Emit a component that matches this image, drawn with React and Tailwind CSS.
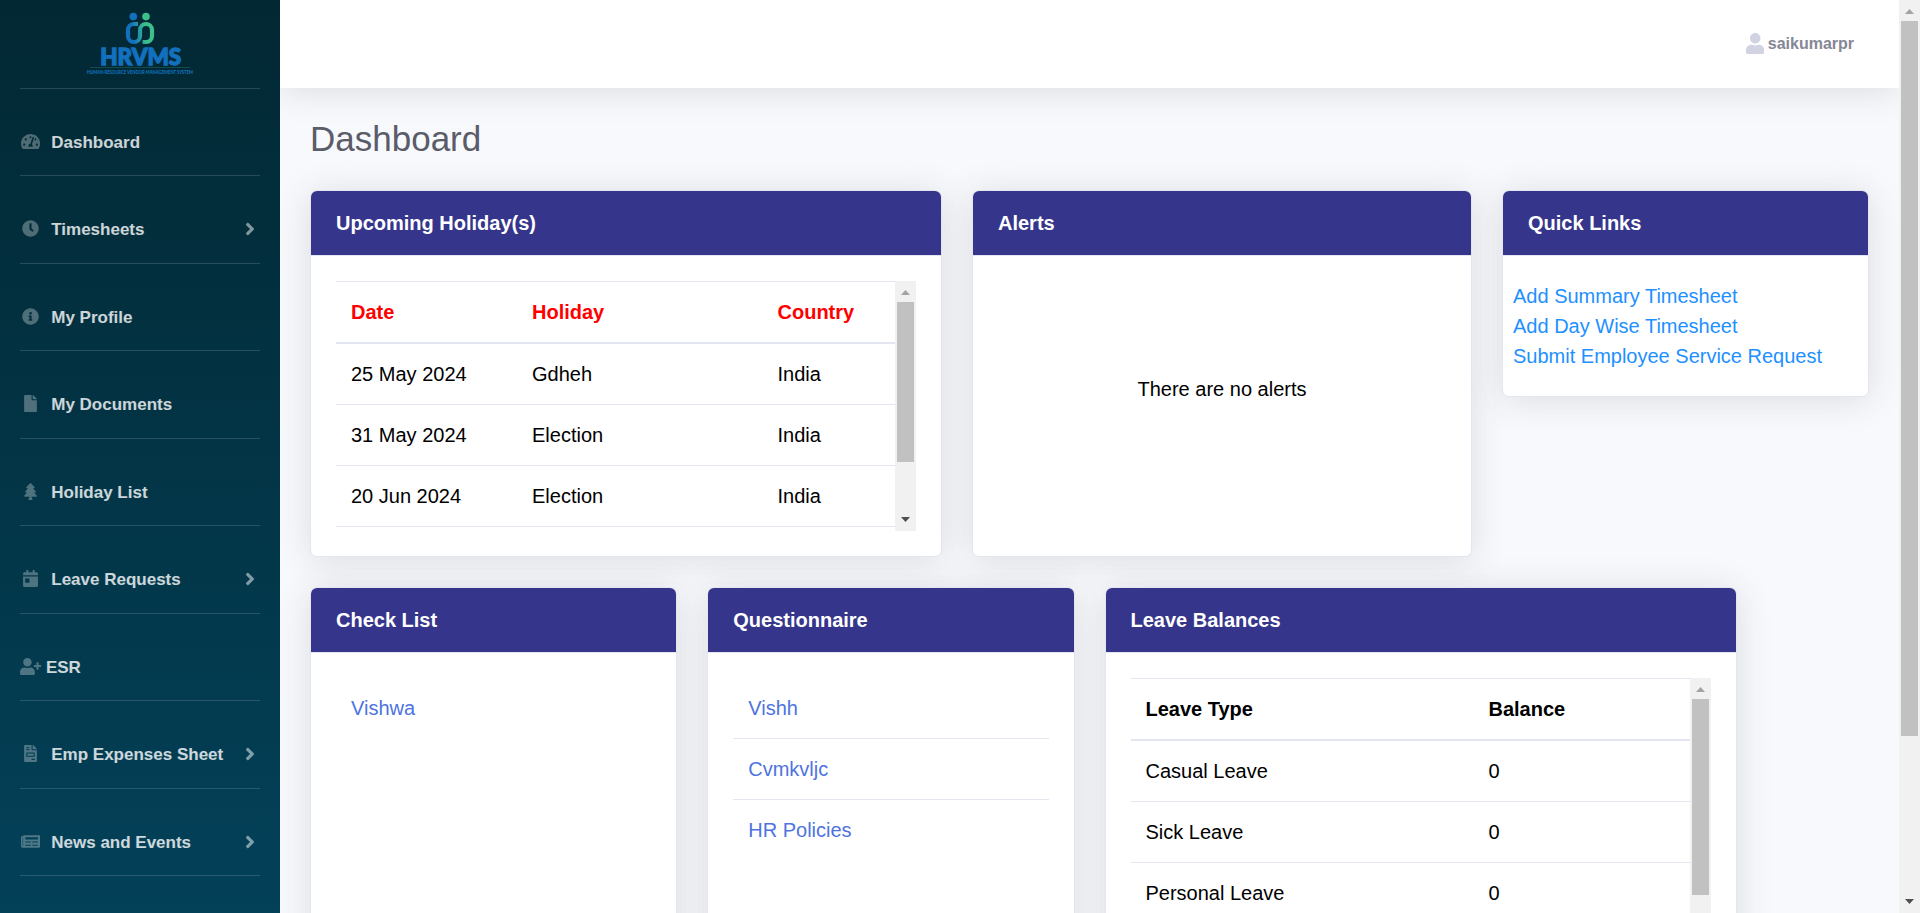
import {
  FaTachometerAlt, FaClock, FaInfoCircle, FaFile, FaTree, FaCalendarDay,
  FaUserPlus, FaFileInvoice, FaNewspaper, FaAngleRight, FaUser,
} from "react-icons/fa";

const NAV = [
  { label: "Dashboard", icon: FaTachometerAlt, size: "w-[19.1px]" },
  { label: "Timesheets", icon: FaClock, size: "w-[17px]", more: true },
  { label: "My Profile", icon: FaInfoCircle, size: "w-[17px]" },
  { label: "My Documents", icon: FaFile, size: "w-[13px]" },
  { label: "Holiday List", icon: FaTree, size: "w-[13px]" },
  { label: "Leave Requests", icon: FaCalendarDay, size: "w-[15px]", more: true },
  { label: "ESR", icon: FaUserPlus, size: "w-[21.25px]", tight: true },
  { label: "Emp Expenses Sheet", icon: FaFileInvoice, size: "w-[13px]", more: true },
  { label: "News and Events", icon: FaNewspaper, size: "w-[19.1px]", more: true },
];

function Logo() {
  return (
    <svg width="120" height="68" viewBox="-6 0 120 68" className="block overflow-visible">
      <defs>
        <linearGradient id="link" gradientUnits="userSpaceOnUse" x1="40" y1="30" x2="66" y2="26">
          <stop offset="0.3" stopColor="#1270bd" />
          <stop offset="0.8" stopColor="#3dbf8b" />
        </linearGradient>
      </defs>
      <circle cx="47.3" cy="4.6" r="3.8" fill="#1270bd" />
      <circle cx="60" cy="4.6" r="3.8" fill="#3dbf8b" />
      <path
        d="M52 12 H48 a6 6 0 0 0 -6 6 V24 a6 6 0 0 0 12 0 V18 a6 6 0 0 1 12 0 V24 a6 6 0 0 1 -6 6 H56.5"
        fill="none" stroke="url(#link)" strokeWidth="4.2"
      />
      <text x="14.2" y="52.7" fontFamily="Lato, sans-serif" fontWeight="900" fontSize="22.5" textLength="81" lengthAdjust="spacingAndGlyphs" fill="#1270bd" stroke="#1270bd" strokeWidth="1.3">HRVMS</text>
      <rect x="4" y="55" width="100" height="1" fill="#0f4c4c" />
      <text x="1" y="62" fontFamily="Lato, sans-serif" fontWeight="900" fontSize="4.8" textLength="106" lengthAdjust="spacingAndGlyphs" fill="#1270bd">HUMAN RESOURCE VENDOR MANAGEMENT SYSTEM</text>
    </svg>
  );
}

function Sidebar() {
  return (
    <aside className="flex h-full w-[280px] shrink-0 flex-col bg-linear-to-b from-[#022833] to-[#034159] px-5">
      <div className="flex h-[88.75px] shrink-0 justify-center border-b border-white/15 pt-3">
        <Logo />
      </div>
      {NAV.map(({ label, icon: Icon, size, more, tight }) => (
        <a key={label} className="flex h-[87.5px] shrink-0 items-center border-b border-white/15 pt-[21px] text-[17px] font-bold text-white/80">
          <span className={tight ? "mr-[4.7px] flex justify-center pb-[2.5px]" : "mr-[10px] flex w-[21.25px] justify-center pb-[2.5px]"}>
            <Icon className={`h-[17px] shrink-0 text-white/30 ${size}`} />
          </span>
          <span className="flex-1">{label}</span>
          {more && <FaAngleRight className="mr-[4.7px] mb-[2px] h-5 w-[10px] text-white/50" />}
        </a>
      ))}
    </aside>
  );
}

function ScrollBar({ thumb, className = "" }) {
  return (
    <div className={`flex w-[21px] shrink-0 flex-col items-center bg-[#f1f1f1] ${className}`}>
      <svg width="21" height="21" viewBox="0 0 21 21" className="shrink-0"><path d="M6 14 L10.5 9 L15 14 Z" fill="#a3a3a3" /></svg>
      <div className={`w-[17px] shrink-0 bg-[#c1c1c1] ${thumb}`} />
      <svg width="21" height="21" viewBox="0 0 21 21" className="mt-auto shrink-0"><path d="M6 7 L15 7 L10.5 12 Z" fill="#505050" /></svg>
    </div>
  );
}

function Card({ title, className = "", children }) {
  return (
    <section className={`flex shrink-0 flex-col rounded-[7px] border border-[#e3e6f0] bg-white shadow-[0_3px_35px_0_rgba(58,59,69,0.15)] ${className}`}>
      <h6 className="flex h-[65px] shrink-0 items-center rounded-t-[6px] border-b border-[#e3e6f0] bg-[#35368b] px-[25px] text-xl font-bold text-white">
        {title}
      </h6>
      {children}
    </section>
  );
}

function Table({ head, rows, widths, headClass, thumb }) {
  return (
    <div className="flex h-[250px] overflow-hidden">
      <table className="w-full table-fixed border-separate border-spacing-0 self-start text-left text-xl text-black">
        <colgroup>{widths.map((w) => <col key={w} className={w} />)}</colgroup>
        <thead>
          <tr className={headClass}>
            {head.map((h) => <th key={h} className="h-[63px] border-t border-b-2 border-[#e3e6f0] px-[15px] py-0">{h}</th>)}
          </tr>
        </thead>
        <tbody>
          {rows.map((r) => (
            <tr key={r[0]}>
              {r.map((c, i) => <td key={i} className="h-[61px] border-b border-[#e3e6f0] px-[15px] py-0">{c}</td>)}
            </tr>
          ))}
        </tbody>
      </table>
      <ScrollBar thumb={thumb} />
    </div>
  );
}

function LinkRows({ items }) {
  return (
    <ul className="px-[25px] pt-[25px] text-xl text-[#4e73df]">
      {items.map((t, i) => (
        <li key={t} className={i ? "flex h-[61px] items-center border-t border-[#e3e6f0] px-[15px]" : "flex h-[60px] items-center px-[15px]"}>{t}</li>
      ))}
    </ul>
  );
}

export default function App() {
  return (
    <div className="flex h-[913px] w-[1920px] overflow-hidden bg-[#f8f9fc] font-['Liberation_Sans',Arial,sans-serif]">
      <Sidebar />
      <div className="flex min-w-0 flex-1 flex-col overflow-hidden">
        <header className="flex h-[88px] shrink-0 items-center justify-end gap-[3.5px] bg-white pr-[45px] shadow-[0_3px_35px_0_rgba(58,59,69,0.15)]">
          <FaUser className="mb-px h-[21px] w-[18.4px] text-[#d1d3e2]" />
          <span className="text-base font-bold text-[#858796]">saikumarpr</span>
        </header>
        <main className="px-[30px] pt-[30px]">
          <h1 className="mb-[30px] text-[35px] leading-[42px] text-[#5a5c69]">Dashboard</h1>
          <div className="mb-[30px] flex items-start gap-[30px]">
            <Card title="Upcoming Holiday(s)" className="h-[367px] w-[632px]">
              <div className="p-[25px]">
                <Table
                  head={["Date", "Holiday", "Country"]}
                  widths={["w-[181px]", "w-[245.5px]", "w-auto"]}
                  headClass="text-[#ff0000]"
                  thumb="h-[160px]"
                  rows={[["25 May 2024", "Gdheh", "India"], ["31 May 2024", "Election", "India"], ["20 Jun 2024", "Election", "India"]]}
                />
              </div>
            </Card>
            <Card title="Alerts" className="h-[367px] w-[500px]">
              <p className="flex h-[266px] items-center justify-center text-xl text-black">There are no alerts</p>
            </Card>
            <Card title="Quick Links" className="h-[207px] w-[367px]">
              <ul className="px-[10px] pt-[25px] text-xl leading-[30px] text-[#1e90ff]">
                <li>Add Summary Timesheet</li>
                <li>Add Day Wise Timesheet</li>
                <li>Submit Employee Service Request</li>
              </ul>
            </Card>
          </div>
          <div className="flex gap-[30px]">
            <Card title="Check List" className="h-[367px] w-[367.25px]"><LinkRows items={["Vishwa"]} /></Card>
            <Card title="Questionnaire" className="h-[367px] w-[367.25px]"><LinkRows items={["Vishh", "Cvmkvljc", "HR Policies"]} /></Card>
            <Card title="Leave Balances" className="h-[367px] w-[632px]">
              <div className="p-[25px]">
                <Table
                  head={["Leave Type", "Balance"]}
                  widths={["w-[343px]", "w-auto"]}
                  headClass="text-black"
                  thumb="h-[196px]"
                  rows={[["Casual Leave", "0"], ["Sick Leave", "0"], ["Personal Leave", "0"]]}
                />
              </div>
            </Card>
          </div>
        </main>
      </div>
      <ScrollBar thumb="h-[715px]" className="h-full" />
    </div>
  );
}
